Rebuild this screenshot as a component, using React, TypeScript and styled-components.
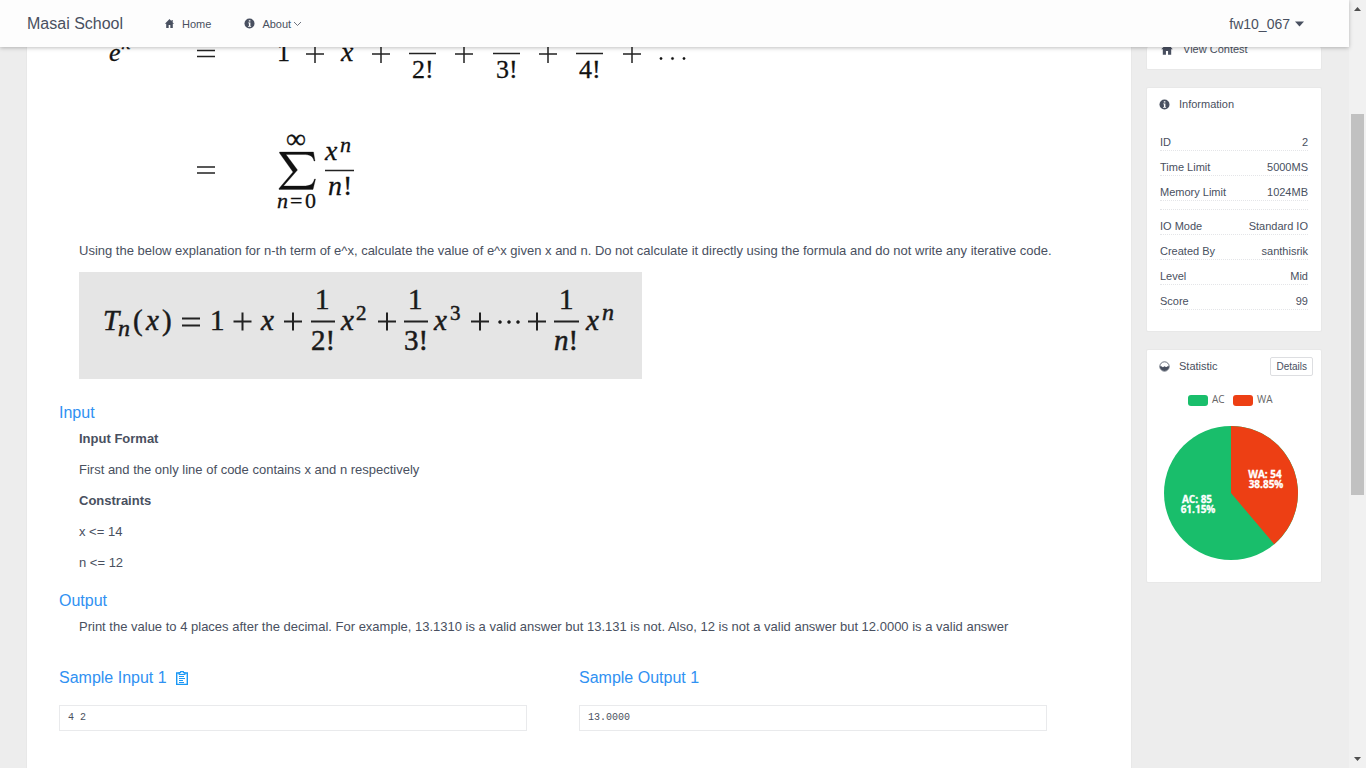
import React from "react";
import styled, { createGlobalStyle } from "styled-components";

const GlobalStyle = createGlobalStyle`
  * { box-sizing: border-box; }
  body {
    margin: 0;
    background: #ededed;
    color: #495060;
    font-family: "Liberation Sans", Arial, sans-serif;
    font-size: 13px;
  }
`;

const Window = styled.div`
  display: flex;
  height: 100vh;
  overflow: hidden;
`;

const Page = styled.div`
  flex: 1;
  min-width: 0;
  display: flex;
  flex-direction: column;
`;

const Header = styled.header`
  position: relative;
  z-index: 1;
  flex: none;
  height: 47px;
  padding: 0 45px 0 27px;
  display: flex;
  align-items: center;
  background: #fdfdfd;
  box-shadow: 0 1px 4px rgba(0, 0, 0, 0.25);
`;

const Brand = styled.a`
  color: inherit;
  font-size: 16px;
  line-height: 24px;
  text-decoration: none;
  margin-right: 41px;
`;

const Nav = styled.nav`
  flex: 1;
  display: flex;
  gap: 33px;
`;

const NavLink = styled.a`
  display: flex;
  align-items: center;
  color: inherit;
  font-size: 11px;
  line-height: 24px;
  text-decoration: none;
  svg:first-child { margin-right: 7px; }
`;

const Chevron = styled.svg`
  margin-left: 2px;
`;

const UserButton = styled.button`
  display: flex;
  align-items: center;
  gap: 5px;
  border: 0;
  padding: 0;
  background: none;
  color: inherit;
  font-family: inherit;
  font-size: 14px;
  line-height: 24px;
`;

const Body = styled.div`
  flex: 1;
  min-height: 0;
  display: flex;
  gap: 14px;
  padding: 0 27px 0 26px;
`;

const Problem = styled.main`
  flex: 1;
  min-width: 0;
  padding: 0 32px;
  background: #fff;
  border: solid #e8e8e8;
  border-width: 0 1px;
  overflow: hidden;
`;

const Section = styled.section`
  padding-left: 20px;
`;

const Formula = styled.svg`
  display: block;
  max-width: 100%;
  font-family: "Liberation Serif", "Times New Roman", serif;
`;

const Text = styled.p`
  margin: 0 0 11px;
  line-height: 20px;
  font-weight: ${(p: { $bold?: boolean }) => (p.$bold ? 700 : 400)};
`;

const Heading = styled.h2`
  display: flex;
  align-items: center;
  gap: 9px;
  margin: ${(p: { $top: number }) => p.$top}px 0 4px;
  color: #3091f2;
  font-size: 16px;
  font-weight: 400;
  line-height: 24px;
`;

const Samples = styled.div`
  display: grid;
  grid-template-columns: 1fr 1fr;
`;

const Sample = styled.pre`
  width: 90%;
  height: 26px;
  margin: 15px 0 0;
  padding: 0 8px;
  border: 1px solid #e9eaec;
  font-family: "Liberation Mono", monospace;
  font-size: 10px;
  line-height: 24px;
`;

const CopyButton = styled.button`
  display: flex;
  border: 0;
  padding: 0;
  background: none;
  color: #1a98f5;
`;

const Sidebar = styled.aside`
  width: 176px;
  flex: none;
  display: flex;
  flex-direction: column;
  gap: 17px;
  font-size: 11px;
`;

const Card = styled.section`
  background: #fff;
  border: 1px solid #e8e8e8;
  border-radius: 2px;
`;

const MenuCard = styled(Card)`
  height: 23px;
  display: flex;
  align-items: flex-end;
  overflow: hidden;
  border-top: 0;
  padding: 0 13px 8px;
`;

const MenuLink = styled.a`
  display: flex;
  align-items: center;
  gap: 9px;
  color: inherit;
  line-height: 24px;
  text-decoration: none;
`;

const CardHead = styled.div`
  display: flex;
  align-items: center;
  height: 32px;
  padding: 0 8px 0 12px;
`;

const CardTitle = styled.h3`
  flex: 1;
  margin: 0 0 0 9px;
  font-size: 11px;
  font-weight: 400;
`;

const DetailsButton = styled.button`
  height: 19px;
  padding: 0 5px;
  background: #fff;
  border: 1px solid #dddee1;
  border-radius: 2px;
  color: inherit;
  font-family: inherit;
  font-size: 10px;
`;

const InfoList = styled.ul`
  list-style: none;
  margin: 6px 0 21px;
  padding: 0 13px;
`;

const InfoRow = styled.li`
  display: flex;
  justify-content: space-between;
  align-items: flex-end;
  min-height: ${(p: { $blank?: boolean }) => (p.$blank ? 9 : 25)}px;
  border-bottom: 1px dotted #e4e5e8;
  line-height: 16px;
`;

const Chart = styled.svg`
  display: block;
  width: 100%;
  height: 200px;
  font-family: "Open Sans", sans-serif;
  font-size: 10px;
`;

const ScrollBar = styled.div`
  width: 17px;
  flex: none;
  display: flex;
  flex-direction: column;
  align-items: center;
  background: #f1f1f1;
`;

const ScrollArrow = styled.svg`
  width: 17px;
  height: 17px;
  flex: none;
`;

const Track = styled.div`
  flex: ${(p: { $share: number }) => p.$share};
`;

const Thumb = styled(Track)`
  width: 13px;
  background: #c1c1c1;
`;

function HomeIcon({ size = 11 }: { size?: number }) {
  return (
    <svg width={size} height={size} viewBox="0 0 12 12" fill="currentColor" aria-hidden="true">
      <path d="M6 1.200 1 6.300h1.400V11h2.700V7.700h1.800V11h2.700V6.300H11L9.500 4.800V2.200H8.200v1.300z" />
    </svg>
  );
}

function InfoIcon() {
  return (
    <svg width="11" height="11" viewBox="0 0 11 11" aria-hidden="true">
      <circle cx="5.5" cy="5.5" r="5" fill="currentColor" />
      <path d="M4.2 4.5h2.2v3.400h.7v.8H4.100v-.8h.8V5.300h-.7zM4.800 2.200h1.600v1.400H4.800z" fill="#fff" />
    </svg>
  );
}

function StatIcon() {
  return (
    <svg width="11" height="11" viewBox="0 0 11 11" aria-hidden="true">
      <circle cx="5.5" cy="5.5" r="4.7" fill="none" stroke="currentColor" strokeWidth=".8" />
      <path d="M.8 5.300h1.500c.8 0 .9 1 1.600 1s1-1 1.700-1 1 .8 1.600.8.7-.8 1.400-.8h1.600a4.700 4.700 0 0 1-9.400 0z" fill="currentColor" />
    </svg>
  );
}

function ClipboardIcon() {
  return (
    <svg width="12" height="14" viewBox="0 0 12 14" fill="none" stroke="currentColor" aria-hidden="true">
      <path d="M3 2H.7v11.400h10.600V2H9" strokeWidth="1.400" />
      <path d="M3.200 3.500V1.600h1.500V.5h2.600v1.100h1.500v1.900z" strokeWidth="1.200" />
      <path d="M3 5.500h5M3 7.500h6M3 9.500h4M3 11.500h5" strokeWidth="1" />
    </svg>
  );
}

function Plus({ x, y, r = 9 }: { x: number; y: number; r?: number }) {
  return <path d={`M${x - r} ${y}h${2 * r}M${x} ${y - r}v${2 * r}`} />;
}

function SeriesFormula() {
  return (
    <Formula width="630" height="194" viewBox="0 0 630 194" role="img" aria-label="Series for e to the x">
      <g stroke="#222" strokeWidth="1.500">
        <path d="M118 3.500h18M118 9.500h18M118 120h18M118 126h18" />
        <Plus x={236} y={7} />
        <Plus x={302} y={7} />
        <Plus x={385} y={7} />
        <Plus x={469} y={7} />
        <Plus x={553} y={7} />
        <path d="M330 6.500h27M414 6.500h27M497 6.500h27M246 123.500h29" />
      </g>
      <g fill="#111" stroke="#111" strokeWidth=".3" fontSize="26">
        <text x="30" y="14" fontStyle="italic">e</text>
        <text x="43" y="2" fontStyle="italic" fontSize="19">x</text>
        <text x="198" y="14">1</text>
        <text x="262" y="14" fontStyle="italic" fontSize="28">x</text>
        <text x="333" y="31">2!</text>
        <text x="417" y="31">3!</text>
        <text x="500" y="31">4!</text>
        <circle cx="582" cy="11.500" r="1.200" />
        <circle cx="593.500" cy="11.500" r="1.200" />
        <circle cx="605" cy="11.500" r="1.200" />
        <path d="M200.500 105h34l1.500 9h-1c-1-5-4-6.500-11-6.500H207l11.500 15.500L204.500 139H224c8 0 10-2 11.500-7h1l-2.500 10.500h-34v-1L214 125l-13.500-19z" />
        <text x="207" y="101" fontSize="28">∞</text>
        <text x="198" y="161" fontSize="22" fontStyle="italic">n</text>
        <text x="211" y="161" fontSize="22">=</text>
        <text x="226" y="161" fontSize="22">0</text>
        <text x="246" y="113" fontStyle="italic" fontSize="28">x</text>
        <text x="261" y="105" fontStyle="italic" fontSize="22">n</text>
        <text x="249" y="148" fontStyle="italic" fontSize="28">n</text>
        <text x="264" y="148" fontSize="28">!</text>
      </g>
    </Formula>
  );
}

function TermFormula() {
  return (
    <Formula width="563" height="107" viewBox="0 0 563 107" role="img" aria-label="n-th term of the series">
      <rect width="563" height="107" fill="#e5e5e5" />
      <g stroke="#222" strokeWidth="2">
        <path d="M103 46.500h18M103 53.500h18" />
        <Plus x={163.5} y={49.5} />
        <Plus x={214} y={49.5} />
        <Plus x={308} y={49.5} />
        <Plus x={401} y={49.5} />
        <Plus x={458} y={49.5} />
        <path d="M232 49.500h24M325 49.500h24M475 49.500h25" />
      </g>
      <g fill="#1a1a1a" stroke="#1a1a1a" strokeWidth=".5" fontSize="29">
        <text x="24" y="58" fontStyle="italic">T</text>
        <text x="39" y="64" fontStyle="italic" fontSize="24">n</text>
        <text x="54" y="58">(</text>
        <text x="67" y="58" fontStyle="italic">x</text>
        <text x="83" y="58">)</text>
        <text x="131" y="58">1</text>
        <text x="182" y="58" fontStyle="italic">x</text>
        <text x="236" y="37">1</text>
        <text x="232" y="78">2!</text>
        <text x="262" y="58" fontStyle="italic">x</text>
        <text x="277" y="48" fontSize="21">2</text>
        <text x="329" y="37">1</text>
        <text x="325" y="78">3!</text>
        <text x="355" y="58" fontStyle="italic">x</text>
        <text x="371" y="48" fontSize="21">3</text>
        <circle cx="421" cy="50" r="1.500" />
        <circle cx="430" cy="50" r="1.500" />
        <circle cx="439" cy="50" r="1.500" />
        <text x="480" y="37">1</text>
        <text x="475" y="78"><tspan fontStyle="italic">n</tspan>!</text>
        <text x="507" y="58" fontStyle="italic">x</text>
        <text x="523" y="48" fontStyle="italic" fontSize="24">n</text>
      </g>
    </Formula>
  );
}

function PieChart() {
  return (
    <Chart viewBox="0 -2 174 200" role="img" aria-label="Accepted and wrong answers">
      <rect x="41" y="11" width="20" height="11" rx="3" fill="#19be6b" />
      <text x="65" y="19" fill="#666">AC</text>
      <rect x="86" y="11" width="20" height="11" rx="3" fill="#ed3f14" />
      <text x="110" y="19" fill="#666">WA</text>
      <circle cx="84" cy="109" r="67" fill="#19be6b" />
      <path d="M84 109V42a67 67 0 0 1 43.200 118.200z" fill="#ed3f14" />
      <g fill="#fff" stroke="#fff" strokeWidth=".3" fontWeight="700" textAnchor="middle">
        <text x="118" y="94">WA: 54</text>
        <text x="119" y="104">38.85%</text>
        <text x="50" y="119">AC: 85</text>
        <text x="51" y="129">61.15%</text>
      </g>
    </Chart>
  );
}

const limits = [["ID", "2"], ["Time Limit", "5000MS"], ["Memory Limit", "1024MB"]];
const details = [["IO Mode", "Standard IO"], ["Created By", "santhisrik"], ["Level", "Mid"], ["Score", "99"]];

function InfoRows({ rows }: { rows: string[][] }) {
  return (
    <>
      {rows.map(([name, value]) => (
        <InfoRow key={name}>
          <span>{name}</span>
          <span>{value}</span>
        </InfoRow>
      ))}
    </>
  );
}

export default function App() {
  return (
    <Window>
      <GlobalStyle />
      <Page>
        <Header>
          <Brand href="#">Masai School</Brand>
          <Nav>
            <NavLink href="#"><HomeIcon />Home</NavLink>
            <NavLink href="#">
              <InfoIcon />
              About
              <Chevron width="9" height="6" viewBox="0 0 9 6" fill="none" stroke="currentColor" strokeWidth=".8" aria-hidden="true">
                <path d="m1 1 3.500 3.500L8 1" />
              </Chevron>
            </NavLink>
          </Nav>
          <UserButton>
            fw10_067
            <svg width="9" height="6" viewBox="0 0 9 6" fill="currentColor" aria-hidden="true"><path d="M0 .5h9L4.500 5.500z" /></svg>
          </UserButton>
        </Header>
        <Body>
          <Problem>
            <Section>
              <SeriesFormula />
              <Text>
                Using the below explanation for n-th term of e^x, calculate the value of e^x given x and n. Do not
                calculate it directly using the formula and do not write any iterative code.
              </Text>
              <TermFormula />
            </Section>
            <Heading $top={22}>Input</Heading>
            <Section>
              <Text $bold>Input Format</Text>
              <Text>First and the only line of code contains x and n respectively</Text>
              <Text $bold>Constraints</Text>
              <Text>x &lt;= 14</Text>
              <Text>n &lt;= 12</Text>
            </Section>
            <Heading $top={16}>Output</Heading>
            <Section>
              <Text>
                Print the value to 4 places after the decimal. For example, 13.1310 is a valid answer but 13.131 is
                not. Also, 12 is not a valid answer but 12.0000 is a valid answer
              </Text>
            </Section>
            <Samples>
              <div>
                <Heading $top={18}>
                  Sample Input 1
                  <CopyButton aria-label="Copy sample input"><ClipboardIcon /></CopyButton>
                </Heading>
                <Sample>4 2</Sample>
              </div>
              <div>
                <Heading $top={18}>Sample Output 1</Heading>
                <Sample>13.0000</Sample>
              </div>
            </Samples>
          </Problem>
          <Sidebar>
            <MenuCard>
              <MenuLink href="#"><HomeIcon size={14} />View Contest</MenuLink>
            </MenuCard>
            <Card>
              <CardHead>
                <InfoIcon />
                <CardTitle>Information</CardTitle>
              </CardHead>
              <InfoList>
                <InfoRows rows={limits} />
                <InfoRow $blank aria-hidden="true" />
                <InfoRows rows={details} />
              </InfoList>
            </Card>
            <Card>
              <CardHead>
                <StatIcon />
                <CardTitle>Statistic</CardTitle>
                <DetailsButton>Details</DetailsButton>
              </CardHead>
              <PieChart />
            </Card>
          </Sidebar>
        </Body>
      </Page>
      <ScrollBar aria-hidden="true">
        <ScrollArrow viewBox="0 0 17 17"><path d="M5 11h7L8.500 7z" fill="#505050" /></ScrollArrow>
        <Track $share={97} />
        <Thumb $share={381} />
        <Track $share={256} />
        <ScrollArrow viewBox="0 0 17 17"><path d="M5 6h7L8.500 10z" fill="#505050" /></ScrollArrow>
      </ScrollBar>
    </Window>
  );
}
